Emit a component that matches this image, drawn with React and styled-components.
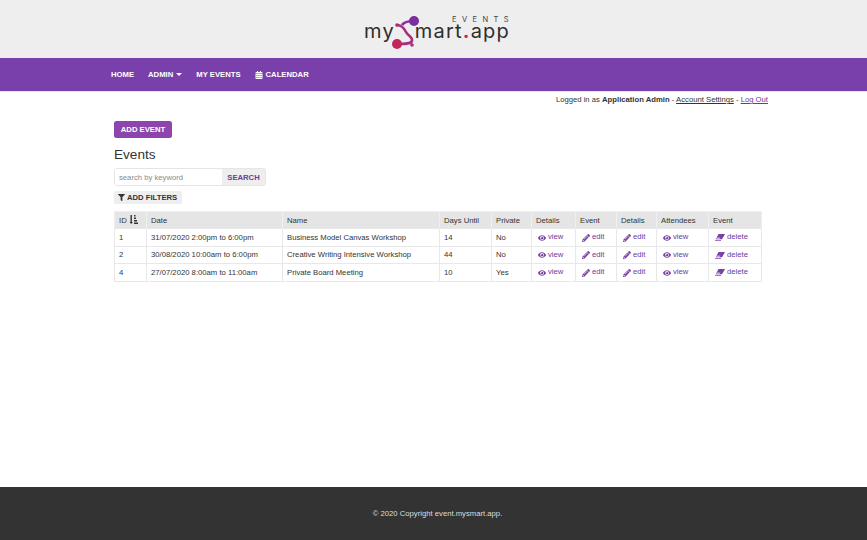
import React from "react";
import styled, { createGlobalStyle } from "styled-components";
import { FaEye, FaPencilAlt, FaFilter, FaCalendarAlt } from "react-icons/fa";

const Global = createGlobalStyle`
  html, body { margin: 0; padding: 0; }
  body {
    font-family: "Liberation Sans", Arial, sans-serif;
    font-size: 7.7px;
    color: #333;
    background: #fff;
  }
`;

const Page = styled.div`
  display: flex;
  flex-direction: column;
  height: 540px;
  overflow: hidden;
`;

const LogoBar = styled.header`
  height: 58px;
  background: #eeeeee;
  display: flex;
  justify-content: center;
`;

const Logo = styled.div`
  position: relative;
  display: flex;
  align-items: flex-end;
  height: 44px;
  margin-left: 7px;
  font-family: "Inter", sans-serif;
  font-weight: 400;
  font-size: 20px;
  line-height: 25px;
  letter-spacing: 1.2px;
  color: #2e2e2e;
`;

const LogoEvents = styled.span`
  position: absolute;
  right: -4px;
  top: 15px;
  font-size: 7.5px;
  line-height: 9px;
  letter-spacing: 5.4px;
  color: #444;
`;

const LogoMark = styled.svg`
  width: 28px;
  height: 34px;
  margin: 0 -5px -5px -3px;
  flex: none;
`;

const Dot = styled.span`
  color: #c2255c;
  font-weight: 700;
`;

const Nav = styled.nav`
  height: 33px;
  background: #7940ab;
  border-bottom: 1px solid #e9e4f0;
  display: flex;
  align-items: center;
  padding-left: 111px;
  gap: 14px;
`;

const NavItem = styled.a`
  color: #fff;
  font-size: 7.7px;
  font-weight: bold;
  display: inline-flex;
  align-items: center;
  gap: 3px;
  svg { font-size: 8px; }
`;

const Caret = styled.span`
  width: 0;
  height: 0;
  border-left: 3px solid transparent;
  border-right: 3px solid transparent;
  border-top: 3px solid #fff;
`;

const UserLine = styled.div`
  height: 17px;
  padding: 3px 99px 0 0;
  text-align: right;
  line-height: 10px;
  box-sizing: border-box;
`;

const PlainLink = styled.a`
  color: ${(p) => (p.$purple ? "#6a3a9c" : "#333")};
  text-decoration: underline;
`;

const Main = styled.main`
  flex: 1;
  padding: 12px 106px 0 114px;
`;

const AddButton = styled.button`
  display: block;
  width: 58px;
  height: 17px;
  padding: 0;
  background: #8e44ad;
  border: 0;
  border-radius: 2.5px;
  color: #fff;
  font: bold 7.7px "Liberation Sans", Arial, sans-serif;
`;

const Title = styled.h2`
  margin: 8px 0 0;
  font-size: 13.6px;
  line-height: 17px;
  font-weight: normal;
  color: #333;
`;

const SearchRow = styled.div`
  display: flex;
  width: 152px;
  height: 18px;
  margin-top: 5px;
  border: 1px solid #e5e5e5;
  border-radius: 2.5px;
  box-sizing: border-box;
`;

const SearchInput = styled.input`
  width: 107px;
  border: 0;
  outline: 0;
  padding: 0 4px;
  background: #fff;
  color: #888;
  font: 7.7px "Liberation Sans", Arial, sans-serif;
  box-sizing: border-box;
  &::placeholder { color: #8a8a8a; opacity: 1; }
`;

const SearchButton = styled.button`
  flex: 1;
  border: 0;
  padding: 0;
  background: #eeeeee;
  color: #6a3a9c;
  font: bold 7.7px "Liberation Sans", Arial, sans-serif;
`;

const FilterButton = styled.button`
  display: flex;
  align-items: center;
  gap: 2px;
  width: 68px;
  height: 13px;
  margin: 5px 0 0;
  padding: 0 0 0 4px;
  background: #eeeeee;
  border: 0;
  border-radius: 2px;
  color: #333;
  white-space: nowrap;
  font: bold 7.7px "Liberation Sans", Arial, sans-serif;
  svg { font-size: 7px; }
`;

const Table = styled.table`
  width: 647px;
  margin-top: 7px;
  border-collapse: collapse;
  table-layout: fixed;
  font-size: 7.7px;
`;

const Th = styled.th`
  height: 17px;
  padding: 0 4px;
  background: #e5e5e5;
  border: 1px solid #efefef;
  border-bottom-width: 0;
  font-weight: normal;
  text-align: left;
  box-sizing: border-box;
  white-space: nowrap;
`;

const Td = styled.td`
  height: 17.6px;
  padding: 0 4px;
  border: 1px solid #e8e8e8;
  color: #333;
  box-sizing: border-box;
  white-space: nowrap;
`;

const ActionCell = styled(Td)`
  padding-left: 6px;
`;

const Action = styled.a`
  color: #6a3a9c;
  display: inline-flex;
  align-items: center;
  gap: 2px;
  svg { font-size: 8px; color: #7a3fa5; transform: translateY(1px); }
`;

const Eraser = styled.svg`
  width: 10px;
  height: 7px;
`;

const SortIcon = styled.svg`
  width: 9px;
  height: 9px;
  margin-left: 2px;
  vertical-align: -1px;
`;

const Footer = styled.footer`
  height: 53px;
  padding-left: 8px;
  background: #333333;
  color: #ddd;
  display: flex;
  align-items: center;
  justify-content: center;
`;

const widths = [32, 136, 157, 52, 40, 44, 41, 40, 52, 53];

const rows = [
  { id: 1, date: "31/07/2020 2:00pm to 6:00pm", name: "Business Model Canvas Workshop", days: 14, priv: "No" },
  { id: 2, date: "30/08/2020 10:00am to 6:00pm", name: "Creative Writing Intensive Workshop", days: 44, priv: "No" },
  { id: 4, date: "27/07/2020 8:00am to 11:00am", name: "Private Board Meeting", days: 10, priv: "Yes" },
];

export default function App() {
  return (
    <Page>
      <Global />
      <LogoBar>
        <Logo>
          my
          <LogoMark viewBox="0 0 28 34">
            <path d="M22 6C16 6 12 7 10 10" fill="none" stroke="#8b2f9c" strokeWidth="2.6" />
            <path d="M5 10C10 10 12 13 14 17C16 21 21 22 20 26C19 29 12 29 5 29" fill="none" stroke="#a5307f" strokeWidth="2.6" />
            <path d="M18 26L20 30" fill="none" stroke="#a5307f" strokeWidth="1.4" />
            <circle cx="22" cy="6" r="5" fill="#7a2fa0" />
            <circle cx="5" cy="29" r="5" fill="#c2255c" />
            <circle cx="5" cy="10" r="1.8" fill="#b02a70" />
            <circle cx="20" cy="30" r="1.8" fill="#a5307f" />
          </LogoMark>
          mart<Dot>.</Dot>app
          <LogoEvents>EVENTS</LogoEvents>
        </Logo>
      </LogoBar>
      <Nav>
        <NavItem>HOME</NavItem>
        <NavItem>ADMIN<Caret /></NavItem>
        <NavItem>MY EVENTS</NavItem>
        <NavItem><FaCalendarAlt /> CALENDAR</NavItem>
      </Nav>
      <UserLine>
        Logged in as <b>Application Admin</b> - <PlainLink>Account Settings</PlainLink> - <PlainLink $purple>Log Out</PlainLink>
      </UserLine>
      <Main>
        <AddButton>ADD EVENT</AddButton>
        <Title>Events</Title>
        <SearchRow>
          <SearchInput placeholder="search by keyword" />
          <SearchButton>SEARCH</SearchButton>
        </SearchRow>
        <FilterButton><FaFilter /> ADD FILTERS</FilterButton>
        <Table>
          <colgroup>
            {widths.map((w, i) => <col key={i} style={{ width: w }} />)}
          </colgroup>
          <thead>
            <tr>
              <Th>
                ID
                <SortIcon viewBox="0 0 9 9">
                  <path d="M1.5 0h1.4v7h1L2.2 9 .5 7h1zM5 0h1.5v1.5H5zM5 2.5h2v1.5H5zM5 5h3v1.5H5zM5 7.5h4V9H5z" fill="#333" />
                </SortIcon>
              </Th>
              <Th>Date</Th>
              <Th>Name</Th>
              <Th>Days Until</Th>
              <Th>Private</Th>
              <Th>Details</Th>
              <Th>Event</Th>
              <Th>Details</Th>
              <Th>Attendees</Th>
              <Th>Event</Th>
            </tr>
          </thead>
          <tbody>
            {rows.map((r) => (
              <tr key={r.id}>
                <Td>{r.id}</Td>
                <Td>{r.date}</Td>
                <Td>{r.name}</Td>
                <Td>{r.days}</Td>
                <Td>{r.priv}</Td>
                <ActionCell><Action><FaEye /> view</Action></ActionCell>
                <ActionCell><Action><FaPencilAlt /> edit</Action></ActionCell>
                <ActionCell><Action><FaPencilAlt /> edit</Action></ActionCell>
                <ActionCell><Action><FaEye /> view</Action></ActionCell>
                <ActionCell>
                  <Action>
                    <Eraser viewBox="0 0 10 7">
                      <path d="M3.5 0H10L7 5.2H.8z" fill="#7a3fa5" />
                      <path d="M.8 5.2L2 3.6h3.4L4.4 5.2z" fill="#c9aedb" />
                      <path d="M0 6.5h6" stroke="#7a3fa5" strokeWidth=".7" />
                    </Eraser>
                    delete
                  </Action>
                </ActionCell>
              </tr>
            ))}
          </tbody>
        </Table>
      </Main>
      <Footer>© 2020 Copyright event.mysmart.app.</Footer>
    </Page>
  );
}
